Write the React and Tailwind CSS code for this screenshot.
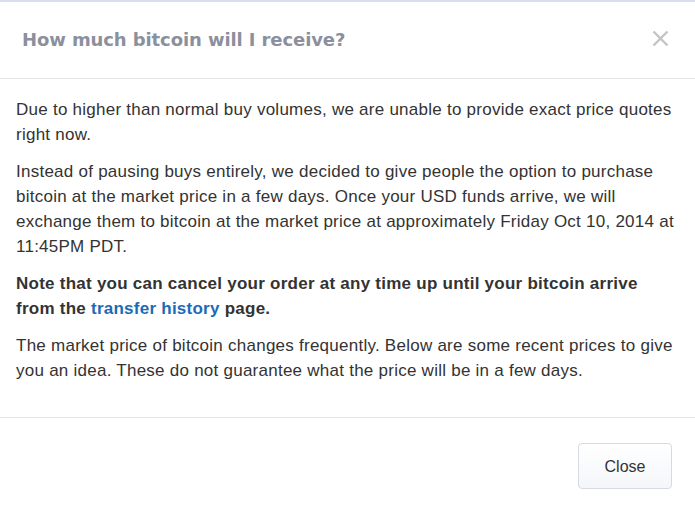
export default function App() {
  return (
    <div className="w-[695px] h-[513px] bg-white flex flex-col font-['Liberation_Sans',Arial,sans-serif] text-[#333]">
      <header className="h-[79px] border-t-2 border-[#dadcef] border-b border-b-[#e6e6e6] flex items-center justify-between pl-[22px] pr-[26px]">
        <h2 className="font-['DejaVu_Sans',sans-serif] font-bold text-[18px] text-[#8b909e] tracking-[-0.1px] -mt-[2px]">
          How much bitcoin will I receive?
        </h2>
        <button className="text-[#c4c4c4] -mt-[4px]" aria-label="Close">
          <svg width="17" height="17" viewBox="0 0 17 17" fill="none" stroke="currentColor" strokeWidth="2.4" strokeLinecap="butt">
            <path d="M1.5 1.5 L15.5 15.5 M15.5 1.5 L1.5 15.5" />
          </svg>
        </button>
      </header>

      <main className="px-4 pt-[18px] pb-[22px] border-b border-[#e6e6e6] text-[17px] leading-[25px] tracking-[0.25px]">
        <p className="mb-3">
          Due to higher than normal buy volumes, we are unable to provide exact price quotes right now.
        </p>
        <p className="mb-3">
          Instead of pausing buys entirely, we decided to give people the option to purchase bitcoin at the market price in a few days. Once your USD funds arrive, we will exchange them to bitcoin at the market price at approximately Friday Oct 10, 2014 at 11:45PM PDT.
        </p>
        <p className="mb-3 font-bold">
          Note that you can cancel your order at any time up until your bitcoin arrive from the{' '}
          <a href="#" className="text-[#1a6bb8]">transfer history</a> page.
        </p>
        <p className="mb-3">
          The market price of bitcoin changes frequently. Below are some recent prices to give you an idea. These do not guarantee what the price will be in a few days.
        </p>
      </main>

      <footer className="flex justify-end pt-[25px] pr-[23px]">
        <button className="w-[94px] h-[46px] pt-[2px] rounded-[4px] border border-[#d6dbe2] bg-gradient-to-b from-white to-[#f4f6f9] text-[16px] text-[#333]">
          Close
        </button>
      </footer>
    </div>
  );
}
